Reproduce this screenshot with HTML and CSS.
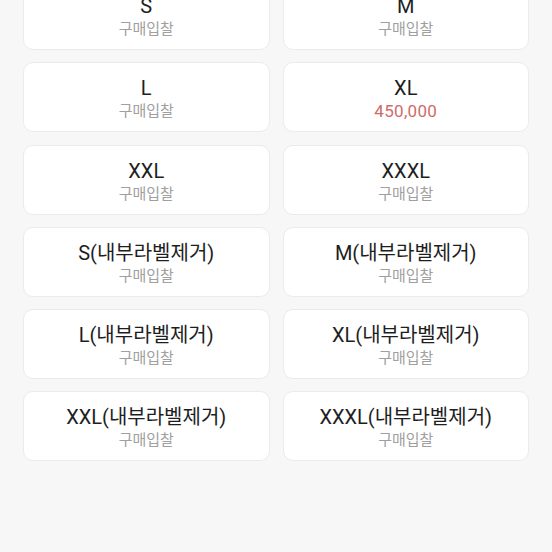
FILE: index.html
```html
<!DOCTYPE html>
<html lang="ko">
<head>
<meta charset="utf-8">
<link rel="stylesheet" href="styles.css">
</head>
<body>
<div class="grid">
  <div class="card"><div class="size">S</div><div class="price">구매입찰</div></div>
  <div class="card"><div class="size">M</div><div class="price">구매입찰</div></div>
  <div class="card"><div class="size">L</div><div class="price">구매입찰</div></div>
  <div class="card"><div class="size">XL</div><div class="price red">450,000</div></div>
  <div class="card"><div class="size">XXL</div><div class="price">구매입찰</div></div>
  <div class="card"><div class="size">XXXL</div><div class="price">구매입찰</div></div>
  <div class="card"><div class="size">S(내부라벨제거)</div><div class="price">구매입찰</div></div>
  <div class="card"><div class="size">M(내부라벨제거)</div><div class="price">구매입찰</div></div>
  <div class="card"><div class="size">L(내부라벨제거)</div><div class="price">구매입찰</div></div>
  <div class="card"><div class="size">XL(내부라벨제거)</div><div class="price">구매입찰</div></div>
  <div class="card"><div class="size">XXL(내부라벨제거)</div><div class="price">구매입찰</div></div>
  <div class="card"><div class="size">XXXL(내부라벨제거)</div><div class="price">구매입찰</div></div>
</div>
</body>
</html>
```
FILE: styles.css
```css
html, body {
  margin: 0;
  padding: 0;
  background: #f7f7f7;
  font-family: Roboto, "Noto Sans CJK KR", sans-serif;
  overflow: hidden;
}
.grid {
  display: grid;
  grid-template-columns: 1fr 1fr;
  column-gap: 13px;
  row-gap: 12.3px;
  padding: 0 23px 0 23px;
  margin-top: -20px;
}
.card {
  height: 70px;
  box-sizing: border-box;
  padding-top: 4px;
  background: #fff;
  border: 1px solid #ebebeb;
  border-radius: 10px;
  display: flex;
  flex-direction: column;
  align-items: center;
  justify-content: center;
}
.size {
  font-size: 20px;
  line-height: 24px;
  color: #1e1e1e;
}
.price {
  font-size: 15px;
  line-height: 22px;
  color: #a0a0a0;
  margin-top: 0;
}
.price.red {
  font-size: 17px;
  color: #cf6a6a;
  letter-spacing: 0.3px;
}
```
